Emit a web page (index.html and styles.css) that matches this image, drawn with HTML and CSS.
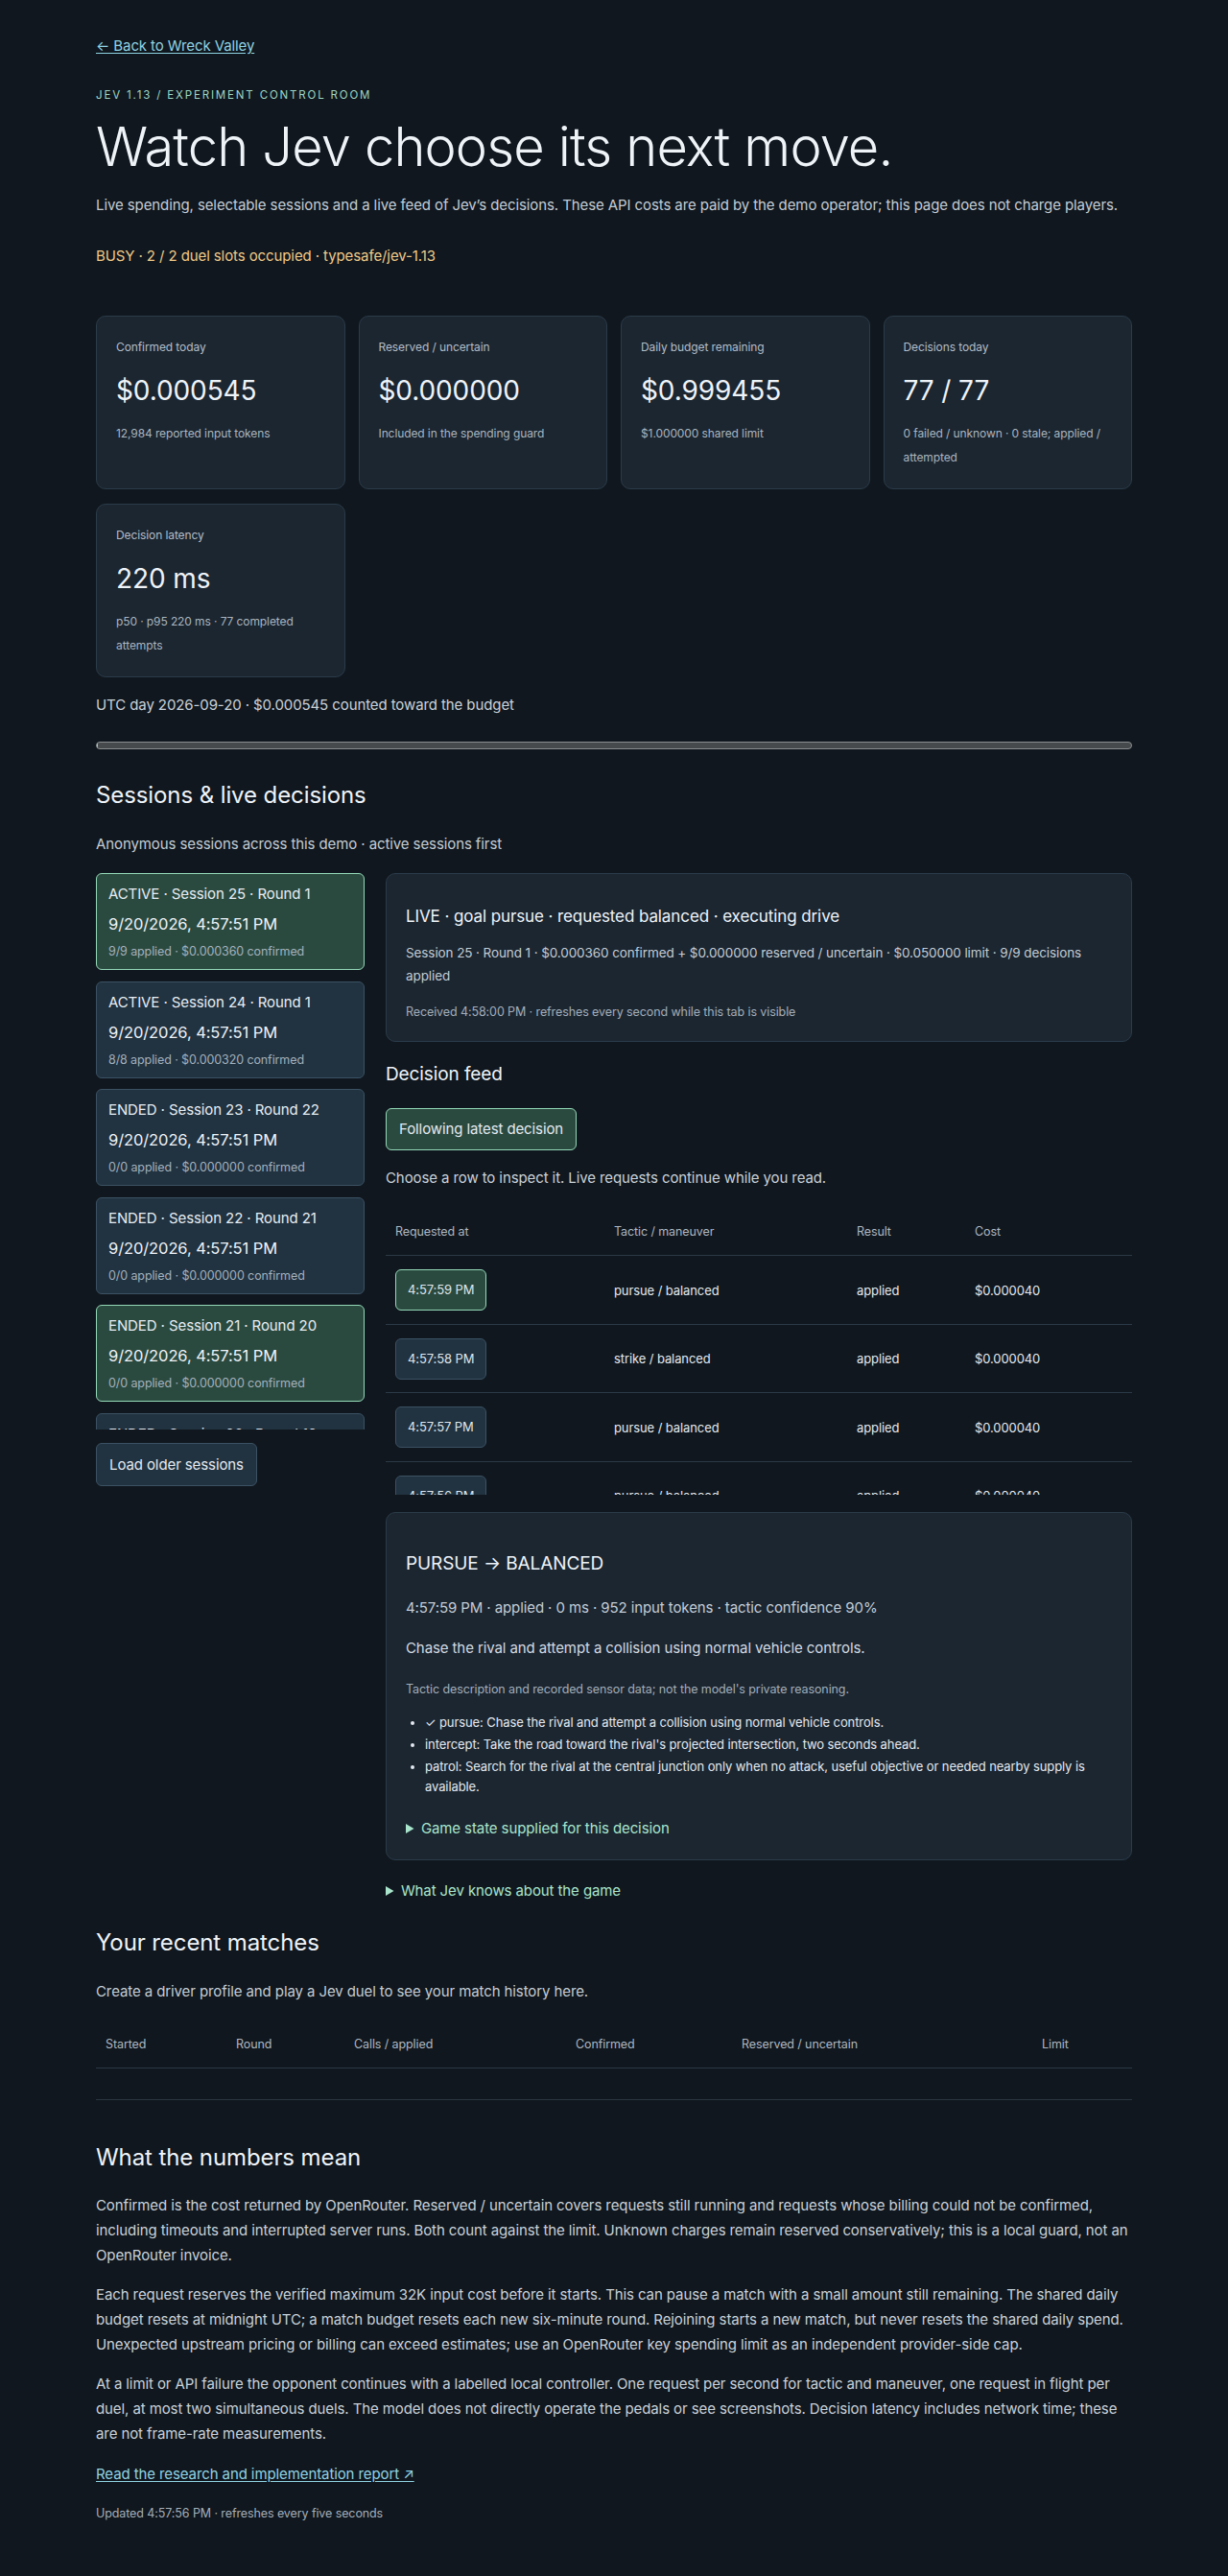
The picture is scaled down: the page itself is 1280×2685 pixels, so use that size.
FILE: index.html
```html
<!DOCTYPE html>
<html lang="en">
<head>
<meta charset="utf-8">
<title>Jev 1.13 · Experiment control room</title>
<link rel="stylesheet" href="styles.css">
</head>
<body>
<main class="page">
  <p class="backline"><a class="back" href="#">← Back to Wreck Valley</a></p>
  <p class="eyebrow">JEV 1.13 / EXPERIMENT CONTROL ROOM</p>
  <h1>Watch Jev choose its next move.</h1>
  <p class="lede">Live spending, selectable sessions and a live feed of Jev’s decisions. These API costs are paid by the demo operator; this page does not charge players.</p>
  <p class="status">BUSY · 2 / 2 duel slots occupied · typesafe/jev-1.13</p>

  <section class="stats">
    <div class="stat">
      <p class="stat-label">Confirmed today</p>
      <p class="stat-value">$0.000545</p>
      <p class="stat-sub">12,984 reported input tokens</p>
    </div>
    <div class="stat">
      <p class="stat-label">Reserved / uncertain</p>
      <p class="stat-value">$0.000000</p>
      <p class="stat-sub">Included in the spending guard</p>
    </div>
    <div class="stat">
      <p class="stat-label">Daily budget remaining</p>
      <p class="stat-value">$0.999455</p>
      <p class="stat-sub">$1.000000 shared limit</p>
    </div>
    <div class="stat">
      <p class="stat-label">Decisions today</p>
      <p class="stat-value">77 / 77</p>
      <p class="stat-sub">0 failed / unknown · 0 stale; applied / attempted</p>
    </div>
    <div class="stat">
      <p class="stat-label">Decision latency</p>
      <p class="stat-value">220 ms</p>
      <p class="stat-sub">p50 · p95 220 ms · 77 completed attempts</p>
    </div>
  </section>

  <p class="utc">UTC day 2026-09-20 · $0.000545 counted toward the budget</p>
  <div class="meter"><div class="meter-fill" style="width:0.05%"></div></div>

  <section class="sessions">
    <h2>Sessions &amp; live decisions</h2>
    <p class="section-note">Anonymous sessions across this demo · active sessions first</p>
    <div class="split">
      <aside class="side">
        <div class="session-list">
          <button class="session selected">
            <span class="s-title">ACTIVE · Session 25 · Round 1</span>
            <span class="s-date">9/20/2026, 4:57:51 PM</span>
            <span class="s-meta">9/9 applied · $0.000360 confirmed</span>
          </button>
          <button class="session">
            <span class="s-title">ACTIVE · Session 24 · Round 1</span>
            <span class="s-date">9/20/2026, 4:57:51 PM</span>
            <span class="s-meta">8/8 applied · $0.000320 confirmed</span>
          </button>
          <button class="session">
            <span class="s-title">ENDED · Session 23 · Round 22</span>
            <span class="s-date">9/20/2026, 4:57:51 PM</span>
            <span class="s-meta">0/0 applied · $0.000000 confirmed</span>
          </button>
          <button class="session">
            <span class="s-title">ENDED · Session 22 · Round 21</span>
            <span class="s-date">9/20/2026, 4:57:51 PM</span>
            <span class="s-meta">0/0 applied · $0.000000 confirmed</span>
          </button>
          <button class="session selected">
            <span class="s-title">ENDED · Session 21 · Round 20</span>
            <span class="s-date">9/20/2026, 4:57:51 PM</span>
            <span class="s-meta">0/0 applied · $0.000000 confirmed</span>
          </button>
          <button class="session">
            <span class="s-title">ENDED · Session 20 · Round 19</span>
            <span class="s-date">9/20/2026, 4:57:51 PM</span>
            <span class="s-meta">0/0 applied · $0.000000 confirmed</span>
          </button>
        </div>
        <button class="load">Load older sessions</button>
      </aside>

      <div class="main-col">
        <div class="card live">
          <h3 class="live-title">LIVE · goal pursue · requested balanced · executing drive</h3>
          <p class="live-meta">Session 25 · Round 1 · $0.000360 confirmed + $0.000000 reserved / uncertain · $0.050000 limit · 9/9 decisions applied</p>
          <p class="live-received">Received 4:58:00 PM · refreshes every second while this tab is visible</p>
        </div>

        <h3 class="feed-title">Decision feed</h3>
        <button class="follow">Following latest decision</button>
        <p class="feed-note">Choose a row to inspect it. Live requests continue while you read.</p>

        <div class="feed-wrap">
          <table class="feed">
            <thead>
              <tr><th>Requested at</th><th>Tactic / maneuver</th><th>Result</th><th>Cost</th></tr>
            </thead>
            <tbody>
              <tr><td><button class="time selected">4:57:59 PM</button></td><td>pursue / balanced</td><td>applied</td><td>$0.000040</td></tr>
              <tr><td><button class="time">4:57:58 PM</button></td><td>strike / balanced</td><td>applied</td><td>$0.000040</td></tr>
              <tr><td><button class="time">4:57:57 PM</button></td><td>pursue / balanced</td><td>applied</td><td>$0.000040</td></tr>
              <tr><td><button class="time">4:57:56 PM</button></td><td>pursue / balanced</td><td>applied</td><td>$0.000040</td></tr>
              <tr><td><button class="time">4:57:55 PM</button></td><td>pursue / balanced</td><td>applied</td><td>$0.000040</td></tr>
            </tbody>
          </table>
        </div>

        <article class="card detail">
          <h3 class="detail-title">PURSUE → BALANCED</h3>
          <p class="detail-meta">4:57:59 PM · applied · 0 ms · 952 input tokens · tactic confidence 90%</p>
          <p class="detail-desc">Chase the rival and attempt a collision using normal vehicle controls.</p>
          <p class="detail-note">Tactic description and recorded sensor data; not the model's private reasoning.</p>
          <ul class="tactics">
            <li>✓ pursue: Chase the rival and attempt a collision using normal vehicle controls.</li>
            <li>intercept: Take the road toward the rival's projected intersection, two seconds ahead.</li>
            <li>patrol: Search for the rival at the central junction only when no attack, useful objective or needed nearby supply is available.</li>
          </ul>
          <details class="disclosure">
            <summary>Game state supplied for this decision</summary>
          </details>
        </article>

        <details class="disclosure knows">
          <summary>What Jev knows about the game</summary>
        </details>
      </div>
    </div>
  </section>

  <section class="matches">
    <h2>Your recent matches</h2>
    <p class="section-note">Create a driver profile and play a Jev duel to see your match history here.</p>
    <table class="history">
      <thead>
        <tr><th>Started</th><th>Round</th><th>Calls / applied</th><th>Confirmed</th><th>Reserved / uncertain</th><th>Limit</th></tr>
      </thead>
      <tbody></tbody>
    </table>
  </section>

  <section class="numbers">
    <h2>What the numbers mean</h2>
    <p>Confirmed is the cost returned by OpenRouter. Reserved / uncertain covers requests still running and requests whose billing could not be confirmed, including timeouts and interrupted server runs. Both count against the limit. Unknown charges remain reserved conservatively; this is a local guard, not an OpenRouter invoice.</p>
    <p>Each request reserves the verified maximum 32K input cost before it starts. This can pause a match with a small amount still remaining. The shared daily budget resets at midnight UTC; a match budget resets each new six-minute round. Rejoining starts a new match, but never resets the shared daily spend. Unexpected upstream pricing or billing can exceed estimates; use an OpenRouter key spending limit as an independent provider-side cap.</p>
    <p>At a limit or API failure the opponent continues with a labelled local controller. One request per second for tactic and maneuver, one request in flight per duel, at most two simultaneous duels. The model does not directly operate the pedals or see screenshots. Decision latency includes network time; these are not frame-rate measurements.</p>
    <p class="report"><a href="#">Read the research and implementation report ↗</a></p>
    <p class="updated">Updated 4:57:56 PM · refreshes every five seconds</p>
  </section>
</main>
</body>
</html>
```

FILE: styles.css
```css
* { box-sizing: border-box; }

html, body { margin: 0; padding: 0; }

body {
  background: #10171e;
  color: #e3e9ef;
  font-family: Inter, "Noto Sans", "Liberation Sans", sans-serif;
  font-size: 15px;
  line-height: 24px;
  letter-spacing: -0.0065em;
}

p { margin: 0; }

.page {
  max-width: 1080px;
  margin: 0 auto;
  padding: 36px 0 56px;
}

.backline { line-height: 24px; }

.back, .report a {
  color: #8fd3e3;
  text-decoration: underline;
  text-underline-offset: 2px;
}

.eyebrow {
  margin-top: 31px;
  font-size: 11.5px;
  line-height: 16px;
  letter-spacing: 0.16em;
  color: #9ed6c4;
}

h1 {
  margin: 15px 0 0;
  font-size: 56px;
  line-height: 62px;
  font-weight: 300;
  color: #eef3f8;
  letter-spacing: -0.015em;
}

.lede {
  margin-top: 18px;
  color: #c3ccd5;
}

.status {
  margin-top: 29px;
  color: #efc987;
}

/* stat cards */
.stats {
  margin-top: 50px;
  display: grid;
  grid-template-columns: repeat(4, 1fr);
  gap: 15px 14px;
}

.stat, .card {
  background: #1b2631;
  border: 1px solid #2b3b49;
  border-radius: 10px;
  padding: 20px;
}

.stat-label {
  font-size: 12px;
  line-height: 24px;
  color: #b3bdc7;
}

.stat-value {
  margin-top: 16px;
  font-size: 28px;
  line-height: 34px;
  color: #eef3f8;
}

.stat-sub {
  margin-top: 15px;
  font-size: 12px;
  line-height: 25px;
  color: #aab5bf;
}

.utc {
  margin-top: 17px;
  color: #c9d1d9;
}

.meter {
  margin-top: 26px;
  height: 8px;
  border-radius: 4px;
  background: #474a4d;
  border: 1px solid #8a8d90;
  overflow: hidden;
}

.meter-fill {
  height: 100%;
  background: #9ed6c4;
}

h2 {
  margin: 0;
  font-size: 24px;
  line-height: 31px;
  font-weight: 400;
  color: #eef3f8;
}

.sessions { margin-top: 32px; }

.section-note {
  margin-top: 24px;
  color: #c3ccd5;
}

.split {
  margin-top: 18px;
  display: grid;
  grid-template-columns: 280px 1fr;
  gap: 22px;
  align-items: start;
}

/* session list */
.session-list {
  height: 580px;
  overflow-y: auto;
  scrollbar-width: none;
  display: flex;
  flex-direction: column;
  gap: 11.5px;
}

button {
  font-family: inherit;
  letter-spacing: inherit;
  color: #e3e9ef;
  cursor: pointer;
}

.session {
  flex: none;
  display: flex;
  flex-direction: column;
  text-align: left;
  height: 101px;
  padding: 11px 12px 9px;
  background: #213240;
  border: 1px solid #3b5264;
  border-radius: 6px;
}

.session.selected, .follow, .time.selected {
  background: #2b4a3f;
  border-color: #93d8b8;
}

.s-title {
  font-size: 15px;
  line-height: 20px;
  color: #e6edf3;
}

.s-date {
  margin-top: 8px;
  font-size: 16.5px;
  line-height: 26px;
  color: #eef3f8;
}

.s-meta {
  margin-top: 7px;
  font-size: 12.5px;
  line-height: 18px;
  color: #a3b1bd;
}

.load {
  margin-top: 14px;
  font-size: 15px;
  line-height: 19px;
  padding: 12px 13px;
  background: #213240;
  border: 1px solid #3b5264;
  border-radius: 6px;
}

/* right column */
.live-title {
  margin: 12px 0 0;
  font-size: 17px;
  line-height: 24px;
  font-weight: 400;
  color: #eef3f8;
}

.live-meta {
  margin-top: 14px;
  font-size: 13.5px;
  line-height: 24px;
  color: #c3ccd5;
}

.live-received {
  margin-top: 16px;
  font-size: 12.5px;
  line-height: 20px;
  color: #a3aeb9;
}

.feed-title {
  margin: 21px 0 0;
  font-size: 19px;
  line-height: 26px;
  font-weight: 400;
  color: #eef3f8;
}

.follow {
  display: block;
  margin-top: 22px;
  font-size: 15px;
  line-height: 20px;
  padding: 11px 13px;
  border: 1px solid #93d8b8;
  border-radius: 6px;
}

.feed-note {
  margin-top: 17px;
  color: #c9d1d9;
}

.feed-wrap {
  margin-top: 20px;
  max-height: 298px;
  overflow-y: auto;
  scrollbar-width: none;
}

table {
  width: 100%;
  border-collapse: collapse;
  table-layout: fixed;
}

th {
  text-align: left;
  font-weight: 400;
  font-size: 12.5px;
  line-height: 20px;
  color: #aeb8c2;
  padding: 14px 10px;
  border-bottom: 1px solid #2b3946;
}

td {
  font-size: 13px;
  line-height: 20px;
  padding: 14px 10px 13.5px;
  border-bottom: 1px solid #2b3946;
  color: #e3e9ef;
}

.feed th:nth-child(1) { width: 228px; }
.feed th:nth-child(2) { width: 253px; }
.feed th:nth-child(3) { width: 123px; }

.time {
  font-size: 13px;
  line-height: 19px;
  padding: 11px 12px;
  background: #213240;
  border: 1px solid #3b5264;
  border-radius: 6px;
  color: #dfe6ec;
}

.detail { margin-top: 18px; }

.detail-title {
  margin: 20px 0 0;
  font-size: 19px;
  line-height: 26px;
  font-weight: 400;
  color: #eef3f8;
}

.detail-meta {
  margin-top: 21px;
  color: #c3ccd5;
}

.detail-desc {
  margin-top: 18px;
  color: #d3dae1;
}

.detail-note {
  margin-top: 21px;
  font-size: 12.5px;
  line-height: 20px;
  color: #a3aeb9;
}

.tactics {
  margin: 14px 0 0;
  padding-left: 20px;
}

.tactics li {
  font-size: 13px;
  line-height: 21px;
  margin-bottom: 2px;
  color: #e3e9ef;
}

.disclosure { margin-top: 21px; }

.disclosure summary {
  color: #a9e5cc;
  cursor: pointer;
}

.knows { margin-top: 20px; }

/* matches */
.matches { margin-top: 26px; }

.history { margin-top: 19px; }

.history th:nth-child(1) { width: 136px; }
.history th:nth-child(2) { width: 123px; }
.history th:nth-child(3) { width: 231px; }
.history th:nth-child(4) { width: 173px; }
.history th:nth-child(5) { width: 313px; }

/* numbers */
.numbers {
  margin-top: 32px;
  border-top: 1px solid #2a3642;
  padding-top: 44px;
}

.numbers h2 + p { margin-top: 22px; }

.numbers p {
  line-height: 26px;
  color: #c9d1d9;
  margin-top: 15px;
}

.numbers .report {
  margin-top: 17px;
  line-height: 24px;
}

.numbers .updated {
  margin-top: 19px;
  font-size: 12.5px;
  line-height: 20px;
  color: #a3aeb9;
}
```
